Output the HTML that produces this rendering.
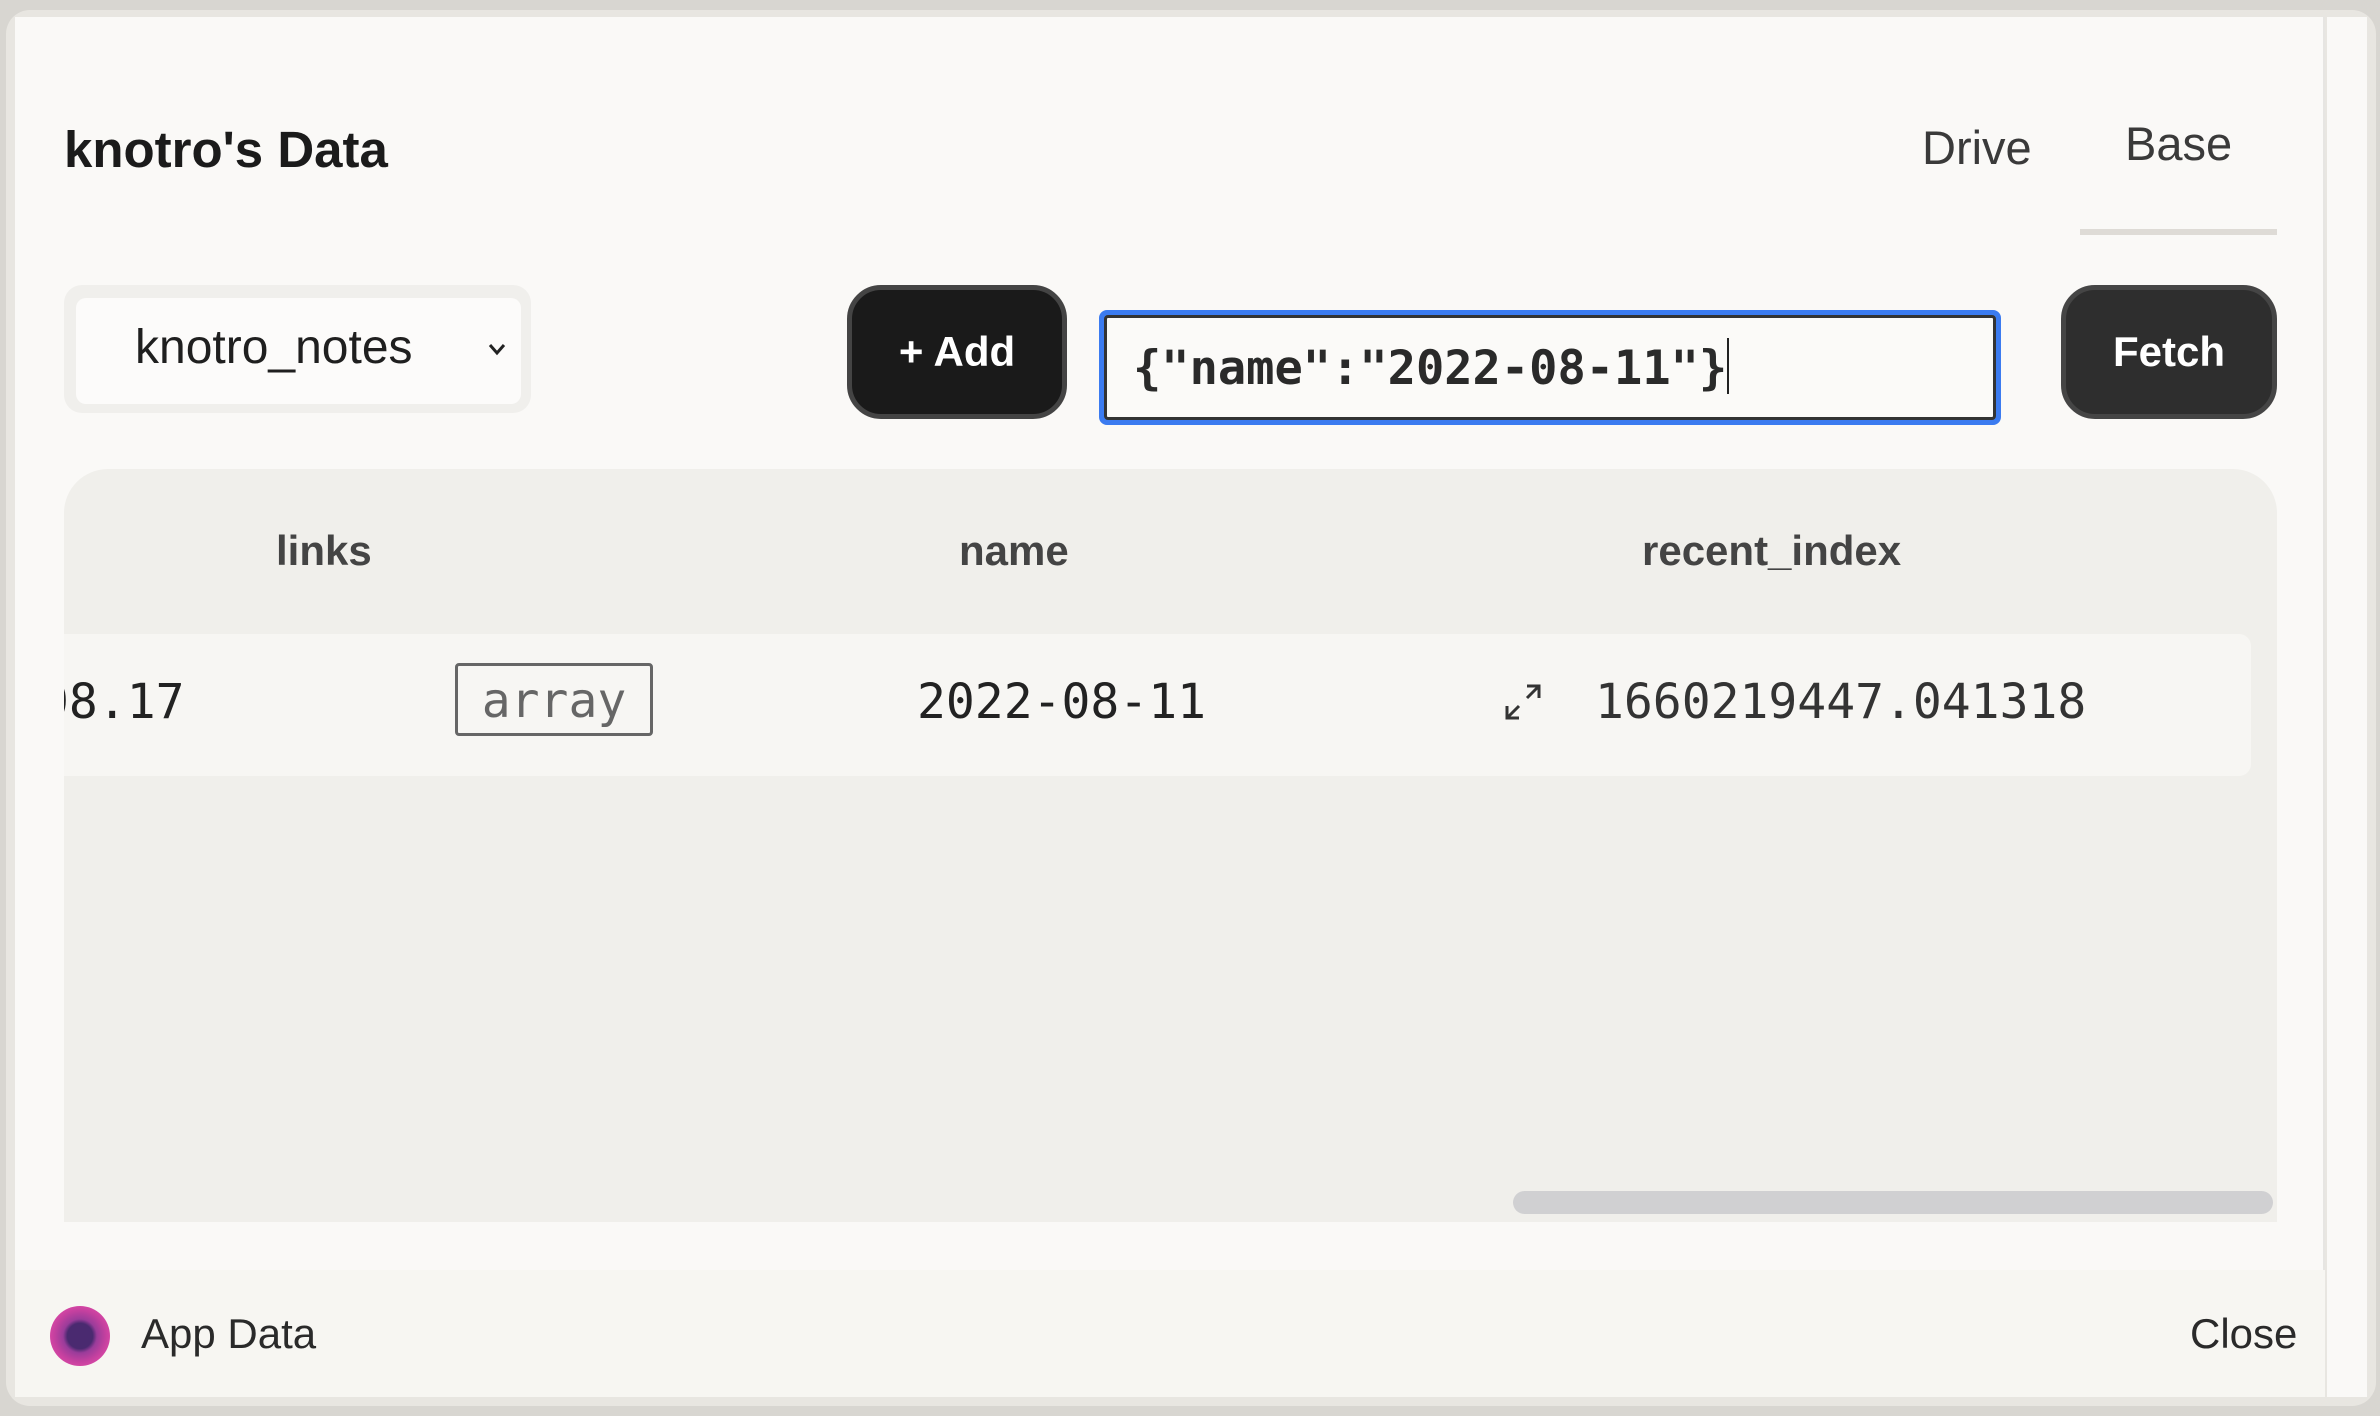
<!DOCTYPE html>
<html><head><meta charset="utf-8"><style>
*{box-sizing:border-box;margin:0;padding:0}
body{width:2380px;height:1416px;background:#d8d6d1;position:relative;overflow:hidden;font-family:"Liberation Sans",sans-serif}
.modal{position:absolute;left:6px;top:10px;width:2370px;height:1396px;background:#e8e6e1;border-radius:24px}
.inner{position:absolute;left:15px;top:17px;width:2310px;height:1380px;background:#faf9f7;border-right:2px solid #e6e5e2}
.strip{position:absolute;left:2327px;top:17px;width:40px;height:1380px;background:#faf9f7}
.abs{position:absolute}
.title{left:64px;top:120px;font-size:51px;font-weight:bold;color:#1b1b1b}
.tab{font-size:47px;color:#3a3a3a}
.mono{font-family:"DejaVu Sans Mono","Liberation Mono",monospace}
</style></head><body>
<div class="modal"></div>
<div class="inner"></div>
<div class="strip"></div>
<div class="abs title">knotro's Data</div>
<div class="abs tab" style="left:1922px;top:120px">Drive</div>
<div class="abs tab" style="left:2125px;top:116px">Base</div>
<div class="abs" style="left:2080px;top:229px;width:197px;height:6px;background:#dedbd6"></div>

<div class="abs" style="left:64px;top:285px;width:467px;height:128px;background:#f0efec;border-radius:18px"></div>
<div class="abs" style="left:76px;top:298px;width:445px;height:106px;background:#fcfbfa;border-radius:10px"></div>
<div class="abs" style="left:135px;top:320px;font-size:48px;color:#1f1f1f">knotro_notes</div>
<svg class="abs" style="left:487px;top:341px" width="20" height="16" viewBox="0 0 20 16"><path d="M3 4 L10 12 L17 4" fill="none" stroke="#222" stroke-width="3"/></svg>

<div class="abs" style="left:847px;top:285px;width:220px;height:134px;background:#1a1a1a;border:5px solid #444;border-radius:34px;color:#fff;font-size:42px;font-weight:bold;display:flex;align-items:center;justify-content:center">+ Add</div>

<div class="abs" style="left:1099px;top:310px;width:902px;height:115px;border:5px solid #3b7bf0;border-radius:8px;background:#3b7bf0"></div>
<div class="abs mono" style="left:1104px;top:315px;width:892px;height:105px;border:3px solid #333;border-radius:4px;background:#fbfaf8;font-size:47px;font-weight:bold;color:#2a2a2a;padding:20px 0 0 26px;white-space:nowrap">{"name":"2022-08-11"}<span style="display:inline-block;width:2px;height:56px;background:#222;vertical-align:-10px"></span></div>

<div class="abs" style="left:2061px;top:285px;width:216px;height:134px;background:#2e2e2e;border:5px solid #454545;border-radius:34px;color:#fff;font-size:42px;font-weight:bold;display:flex;align-items:center;justify-content:center">Fetch</div>

<div class="abs" style="left:64px;top:469px;width:2213px;height:753px;background:#f0efeb;border-radius:44px 44px 0 0"></div>
<div class="abs" style="left:64px;top:527px;width:2213px;text-align:left;font-size:42px;color:#444;font-weight:bold">
<span class="abs" style="left:212px">links</span><span class="abs" style="left:895px">name</span><span class="abs" style="left:1578px">recent_index</span></div>
<div class="abs" style="left:64px;top:634px;width:2187px;height:142px;background:#f7f6f3;border-radius:0 12px 12px 0;overflow:hidden">
<div class="abs mono" style="left:-24px;top:40px;font-size:48px;color:#222;white-space:nowrap">08.17</div>
<div class="abs mono" style="left:391px;top:29px;width:198px;height:73px;border:3px solid #666;border-radius:4px;font-size:48px;color:#666;text-align:center;line-height:70px">array</div>
<div class="abs mono" style="left:853px;top:40px;font-size:48px;color:#222">2022-08-11</div>
<svg class="abs" style="left:1439px;top:48px" width="40" height="40" viewBox="0 0 40 40"><path d="M24 4 H36 V16 M36 4 L24 16 M16 36 H4 V24 M4 36 L16 24" fill="none" stroke="#333" stroke-width="3"/></svg>
<div class="abs mono" style="left:1531px;top:40px;font-size:48px;color:#333">1660219447.041318</div>
</div>
<div class="abs" style="left:1513px;top:1191px;width:760px;height:23px;background:#d0d0d2;border-radius:12px"></div>

<div class="abs" style="left:15px;top:1270px;width:2310px;height:127px;background:#f7f6f2"></div>
<div class="abs" style="left:50px;top:1306px;width:60px;height:60px;border-radius:50%;background:radial-gradient(circle,#4a2a70 0 30%,#9a3c9a 40%,#c4409f 60%,#e04aa8 80%)"></div>
<div class="abs" style="left:141px;top:1310px;font-size:42px;color:#2a2a2a">App Data</div>
<div class="abs" style="left:2190px;top:1310px;font-size:42px;color:#2a2a2a">Close</div>
</body></html>
